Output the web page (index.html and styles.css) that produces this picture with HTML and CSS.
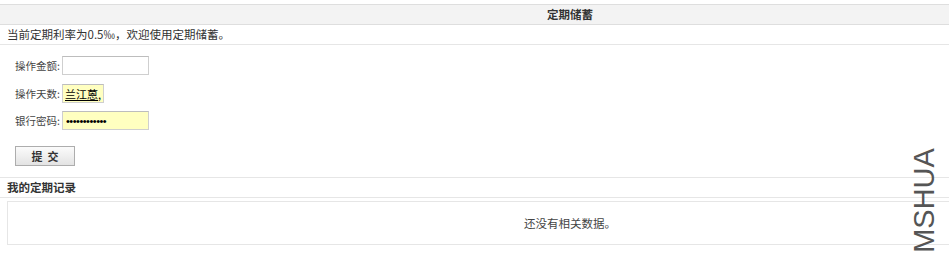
FILE: index.html
```html
<!DOCTYPE html>
<html lang="zh-CN">
<head>
    <meta charset="UTF-8">
    <title>定期储蓄</title>
    <link rel="stylesheet" href="styles.css">
</head>
<body>
    <div class="wrap">
        <!-- 标题 -->
        <div class="title-bar">定期储蓄</div>
        <div class="info-row">当前定期利率为0.5‰，欢迎使用定期储蓄。</div>

        <!-- 操作表单 -->
        <form class="deposit-form">
            <div class="form-row">
                <label>操作金额:</label>
                <input type="text" class="field">
            </div>
            <div class="form-row">
                <label>操作天数:</label>
                <input type="text" class="field short filled" value="兰江蒽,">
            </div>
            <div class="form-row">
                <label>银行密码:</label>
                <input type="password" class="field pass filled" value="123456789012">
            </div>
            <div class="form-row buttons">
                <button type="button" class="submit-btn">提&nbsp;&nbsp;交</button>
            </div>
        </form>

        <!-- 我的定期记录 -->
        <div class="section-title">我的定期记录</div>
        <div class="records">还没有相关数据。</div>
    </div>

    <div class="watermark">MSHUA</div>
</body>
</html>
```

FILE: styles.css
```css
/* styles.css */
html, body {
    margin: 0;
    padding: 0;
    overflow: hidden;
    background-color: #fff;
}

body {
    font-family: "Noto Sans CJK SC", "Liberation Sans", sans-serif;
    font-size: 11.5px;
    color: #333;
    padding-top: 4px;
}

.wrap {
    width: 1140px;
}

.title-bar {
    height: 19px;
    line-height: 19px;
    background-color: #f3f3f3;
    border-top: 1px solid #dedede;
    border-bottom: 1px solid #dedede;
    text-align: center;
    font-weight: bold;
    color: #333;
}

.info-row {
    height: 19px;
    line-height: 19px;
    padding-left: 7px;
    border-bottom: 1px solid #e6e6e6;
}

.deposit-form {
    margin: 0;
    padding: 11px 0 11px 15px;
    border-bottom: 1px solid #e6e6e6;
}

.form-row {
    display: flex;
    align-items: center;
    height: 19px;
    margin-bottom: 9px;
}

.form-row:nth-child(2) {
    margin-bottom: 8px;
}

.form-row:nth-child(3) {
    margin-bottom: 16px;
}

.form-row label {
    width: 47px;
    white-space: nowrap;
    font-size: 10.5px;
    color: #444;
}

.field {
    box-sizing: border-box;
    width: 87px;
    height: 19px;
    margin: 0;
    padding: 0 3px;
    border: 1px solid #cfcfcf;
    border-top-color: #bdbdbd;
    font-family: "Noto Sans CJK SC", "Liberation Sans", sans-serif;
    font-size: 11px;
    color: #000;
    outline: none;
}

.field.short {
    width: 42px;
    padding: 0 2px;
    text-decoration: underline;
}

.field.pass {
    font-family: "Liberation Sans", sans-serif;
    font-size: 11px;
    letter-spacing: -0.5px;
}

.field.filled {
    background-color: #ffffc0;
}

.form-row.buttons {
    height: 20px;
    margin-bottom: 0;
}

.submit-btn {
    width: 60px;
    height: 20px;
    padding: 0;
    border: 1px solid #adadad;
    background: linear-gradient(#fbfbfb, #e3e3e3);
    font-family: "Noto Sans CJK SC", sans-serif;
    font-size: 11px;
    font-weight: bold;
    color: #333;
    cursor: pointer;
}

.section-title {
    height: 19px;
    line-height: 19px;
    padding-left: 7px;
    font-weight: bold;
    border-bottom: 1px solid #e6e6e6;
}

.records {
    margin: 3px 7px 0 7px;
    height: 42px;
    line-height: 42px;
    border: 1px solid #e6e6e6;
    text-align: center;
    color: #444;
}

.watermark {
    position: absolute;
    left: 872px;
    top: 186px;
    transform: rotate(-90deg);
    font-family: "Liberation Sans", sans-serif;
    font-size: 29px;
    line-height: 29px;
    color: #555;
}
```
